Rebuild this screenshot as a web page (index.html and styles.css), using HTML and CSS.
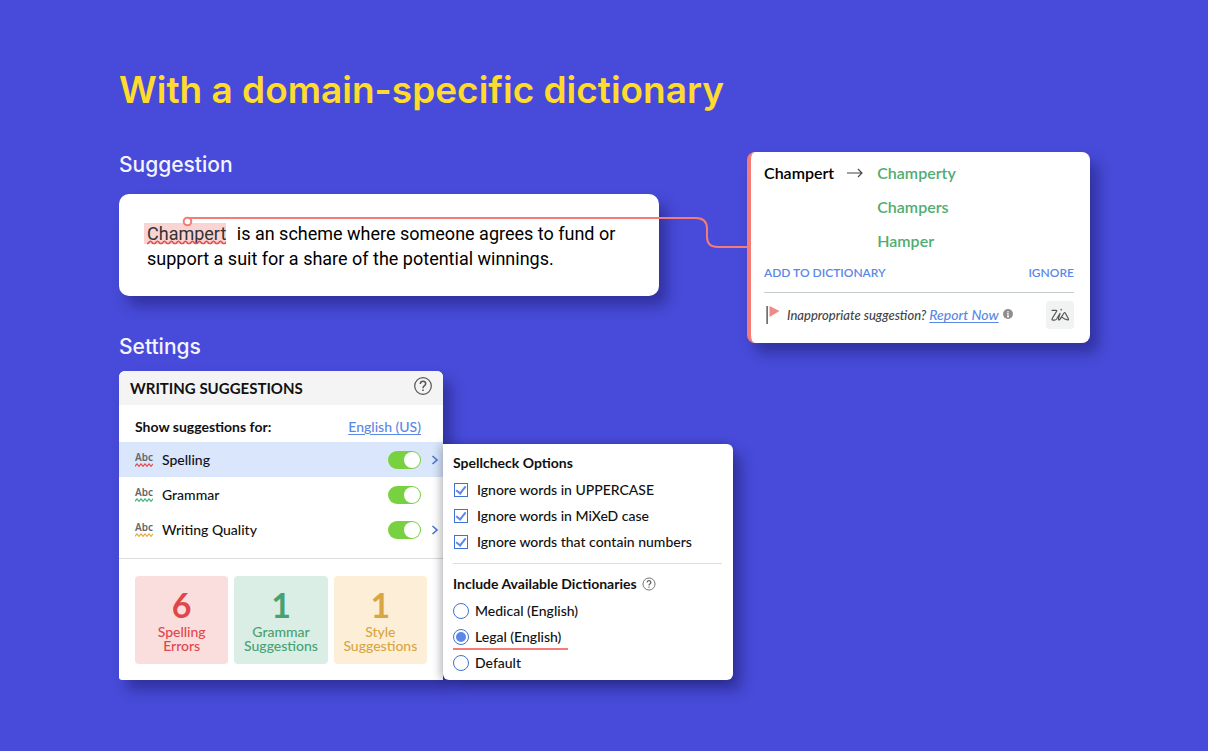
FILE: index.html
```html
<!DOCTYPE html>
<html lang="en">
<head>
<meta charset="utf-8">
<title>Domain-specific dictionary</title>
<link rel="stylesheet" href="styles.css">
</head>
<body>
<main class="page">
  <h1 class="title">With a domain-specific dictionary</h1>
  <div class="layout">
    <div class="main-col">
      <section>
        <h2 class="section-title">Suggestion</h2>
        <p class="sentence"><mark class="flagged">Champert<svg class="flagged-wave" height="5" aria-hidden="true"><defs><pattern id="wave" width="7" height="5" patternUnits="userSpaceOnUse"><path d="M-1 2.5Q0 4 1.2 3.3L2.5 1.7Q3.5 .7 4.5 1.7L5.8 3.3Q7 4 8 2.5" fill="none" stroke="#e2504f" stroke-width="1.5"/></pattern></defs><rect width="100%" height="5" fill="url(#wave)"/></svg></mark> is an scheme where someone agrees to fund or support a suit for a share of the potential winnings.</p>
      </section>
      <svg class="connector" width="566" height="40" viewBox="0 0 566 40" fill="none" stroke="#f37c78" stroke-width="2" aria-hidden="true">
        <path d="M6 6H514Q525 6 525 17V25Q525 35 536 35H566"/>
        <circle cx="5.500" cy="9.500" r="3.800" fill="#fff"/>
      </svg>
      <section>
        <h2 class="section-title settings-title">Settings</h2>
        <div class="panels">
          <div class="panel writing">
            <header class="panel-head">
              <h3 class="panel-title">WRITING SUGGESTIONS</h3>
              <button class="icon-btn" type="button" aria-label="Help">
                <svg width="20" height="20" viewBox="0 0 20 20" fill="none" stroke="#555" stroke-width="1.200"><circle cx="10" cy="10" r="8.300"/><path stroke-width="1.500" d="M7.300 8Q7.400 5.300 10 5.300T12.700 7.700Q12.700 9 11.200 9.900 10 10.600 10 12.200M10 13.600v1.500"/></svg>
              </button>
            </header>
            <div class="language"><span>Show suggestions for:</span><a class="link" href="#">English (US)</a></div>
            <ul class="checks">
              <li class="check active">
                <span class="abc red" aria-hidden="true">Abc<svg width="18" height="4" viewBox="0 0 18 4"><path d="M0 3.300 2 .9 4 3.300 6 .9 8 3.300 10 .9 12 3.300 14 .9 16 3.300 18 .9"/></svg></span>
                <label for="spelling">Spelling</label><input class="switch" id="spelling" type="checkbox" role="switch" checked>
                <button class="chevron" type="button" aria-label="Spelling options"><svg width="8" height="12" viewBox="0 0 8 12"><path d="M1.500 2 6 6 1.500 10"/></svg></button>
              </li>
              <li class="check">
                <span class="abc green" aria-hidden="true">Abc<svg width="18" height="4" viewBox="0 0 18 4"><path d="M0 3.300 2 .9 4 3.300 6 .9 8 3.300 10 .9 12 3.300 14 .9 16 3.300 18 .9"/></svg></span>
                <label for="grammar">Grammar</label><input class="switch" id="grammar" type="checkbox" role="switch" checked>
              </li>
              <li class="check">
                <span class="abc gold" aria-hidden="true">Abc<svg width="18" height="4" viewBox="0 0 18 4"><path d="M0 3.300 2 .9 4 3.300 6 .9 8 3.300 10 .9 12 3.300 14 .9 16 3.300 18 .9"/></svg></span>
                <label for="quality">Writing Quality</label><input class="switch" id="quality" type="checkbox" role="switch" checked>
                <button class="chevron" type="button" aria-label="Writing quality options"><svg width="8" height="12" viewBox="0 0 8 12"><path d="M1.500 2 6 6 1.500 10"/></svg></button>
              </li>
            </ul>
            <div class="stats">
              <div class="stat stat-red"><strong class="stat-num">6</strong>Spelling<br>Errors</div>
              <div class="stat stat-green"><strong class="stat-num">1</strong>Grammar<br>Suggestions</div>
              <div class="stat stat-gold"><strong class="stat-num">1</strong>Style<br>Suggestions</div>
            </div>
          </div>
          <form class="panel options">
            <fieldset class="group">
              <legend class="legend">Spellcheck Options</legend>
              <label class="option"><input class="tick" type="checkbox" checked>Ignore words in UPPERCASE</label>
              <label class="option"><input class="tick" type="checkbox" checked>Ignore words in MiXeD case</label>
              <label class="option"><input class="tick" type="checkbox" checked>Ignore words that contain numbers</label>
            </fieldset>
            <fieldset class="group dictionaries">
              <legend class="legend">Include Available Dictionaries
                <svg width="14" height="14" viewBox="0 0 20 20" fill="none" stroke="#666" stroke-width="1.300" aria-hidden="true"><circle cx="10" cy="10" r="8.600"/><path stroke-width="1.700" d="M7.300 8Q7.400 5.300 10 5.300T12.700 7.700Q12.700 9 11.200 9.900 10 10.600 10 12.200M10 13.600v1.700"/></svg>
              </legend>
              <label class="option choice"><input class="radio" type="radio" name="dict">Medical (English)</label>
              <label class="option choice chosen"><input class="radio" type="radio" name="dict" checked>Legal (English)</label>
              <label class="option choice"><input class="radio" type="radio" name="dict">Default</label>
            </fieldset>
          </form>
        </div>
      </section>
    </div>
    <aside class="popup">
      <div class="fixes">
        <span class="wrong">Champert</span>
        <svg class="arrow" width="16" height="10" viewBox="0 0 16 10" fill="none" stroke="#444" stroke-width="1.100" aria-hidden="true"><path d="M0 5H15M11 1 15 5 11 9"/></svg>
        <div class="fix-list">
          <button class="fix" type="button">Champerty</button>
          <button class="fix" type="button">Champers</button>
          <button class="fix" type="button">Hamper</button>
        </div>
      </div>
      <div class="actions">
        <button class="action" type="button">ADD TO DICTIONARY</button>
        <button class="action" type="button">IGNORE</button>
      </div>
      <footer class="report">
        <svg class="flag" width="14" height="18" viewBox="0 0 14 18" aria-hidden="true"><path d="M.5 0V18H1.700V0Z" fill="#333"/><path d="M3.500 0 13.500 5 3.500 11Z" fill="#f08a86"/></svg>
        <span>Inappropriate suggestion?</span>
        <a class="link" href="#">Report Now</a>
        <svg class="info" width="10" height="10" viewBox="0 0 10 10" aria-hidden="true"><circle cx="5" cy="5" r="5" fill="#8f8f8f"/><path d="M5 2v1.400M4.200 4.600H5V7.500M4 7.600H6" stroke="#fff" stroke-width="1.100" fill="none"/></svg>
        <button class="zia" type="button" aria-label="Zia">
          <svg width="20" height="16" viewBox="0 0 20 16" fill="none" stroke="#555" stroke-width="1.200" stroke-linecap="round" stroke-linejoin="round"><path d="M2 3.300H6Q7.200 3.300 6.500 4.500L2.200 11.500Q1.500 13.200 3 13.200H4.500Q5.800 13.200 6.600 12L10 6.500 8.700 10.800Q8 13.500 9.600 12.800L14 6Q14.800 4.900 15.400 6.200L18.300 11.500Q18.900 13 17.500 12.900 14.500 12.300 12.600 10.600 11.500 9.700 10.700 10.900"/><circle cx="11.300" cy="2.600" r=".3"/></svg>
        </button>
      </footer>
    </aside>
  </div>
</main>
</body>
</html>
```
FILE: styles.css
```css
* { box-sizing: border-box; }

body {
  margin: 0;
  min-height: 100vh;
  background: #484bd9;
  color: #111;
  font: 500 14px/20px Lato, "Liberation Sans", sans-serif;
}

h1, h2, h3, p, ul { margin: 0; padding: 0; }
button { padding: 0; border: 0; background: none; font: inherit; cursor: pointer; }
input { margin: 0; appearance: none; cursor: pointer; }
svg { display: block; flex: none; }

.page { padding: 66px 118px 64px 119px; }

.title {
  color: #ffdb2e;
  font: 600 37px/48px Inter, "Liberation Sans", sans-serif;
}

.layout {
  display: grid;
  grid-template-columns: minmax(0, 1fr) 343px;
  gap: 14px;
  align-items: start;
  margin-top: 38px;
}

.main-col { position: relative; }

.section-title {
  color: #f4f4ff;
  font: 500 21px/26px Inter, "Liberation Sans", sans-serif;
}

.settings-title { margin-top: 38px; }

.sentence {
  width: 88%;
  margin-top: 16px;
  padding: 27px 36px 25px 28px;
  border-radius: 10px;
  background: #fff;
  box-shadow: 8px 10px 14px rgb(20 20 90 / 45%);
  color: #000;
  font: 400 18px/25px Roboto, sans-serif;
}

.flagged {
  position: relative;
  margin: 0 6px 0 -3px;
  padding-left: 3px;
  background: #fad4d2;
  color: #333;
}

.flagged-wave {
  position: absolute;
  left: 3px;
  bottom: -1px;
  width: calc(100% - 3px);
}

.connector { position: absolute; top: 60px; left: 63px; z-index: 3; }

.panels {
  display: grid;
  grid-template-columns: 324fr 290fr;
  align-items: end;
  margin-top: 11px;
}

.panel { background: #fff; box-shadow: 8px 10px 14px rgb(20 20 90 / 45%); }

.writing { border-radius: 6px 6px 0 3px; }

.panel-head {
  display: flex;
  align-items: center;
  justify-content: space-between;
  height: 34px;
  padding: 0 10px 0 11px;
  border-radius: 6px 6px 0 0;
  background: #f4f4f4;
}

.panel-title { font-size: 15px; font-weight: 700; }
.icon-btn { margin-bottom: 4px; }

.language {
  display: flex;
  justify-content: space-between;
  padding: 12px 22px 5px 16px;
  font-weight: 700;
}

.link { color: #5a88e6; font-weight: 500; text-underline-offset: 2px; }

.checks { list-style: none; padding-bottom: 11px; border-bottom: 1px solid #ddd; }

.check {
  display: flex;
  align-items: center;
  height: 35px;
  padding: 0 4px 0 16px;
}

.check.active { background: #d9e6fc; }
.check label { flex: 1; margin-left: 8px; }
.check:not(:has(.chevron)) { padding-right: 22px; }

.abc {
  width: 19px;
  color: #666;
  font: 600 10px/11px "Noto Sans", sans-serif;
}

.abc path { fill: none; stroke: currentColor; stroke-width: 1.200; }
.red svg { color: #e5484d; }
.green svg { color: #3fb27a; }
.gold svg { color: #e5ab3a; }

.switch {
  width: 33px;
  height: 18px;
  padding: 1px;
  border-radius: 9px;
  background: #b9b9b9;
}

.switch::before {
  content: "";
  display: block;
  width: 16px;
  height: 16px;
  border-radius: 50%;
  background: #fff;
}

.switch:checked { background: #77d140; }
.switch:checked::before { margin-left: auto; }

.chevron { margin-left: 10px; }
.chevron path { fill: none; stroke: #4a74d2; stroke-width: 1.600; }

.stats {
  display: grid;
  grid-template-columns: repeat(3, 1fr);
  gap: 6px;
  padding: 17px 16px 16px;
}

.stat {
  padding: 11px 0;
  border-radius: 4px;
  line-height: 14px;
  text-align: center;
}

.stat-num { display: block; margin-bottom: 2px; font-size: 34px; line-height: 36px; font-weight: 700; }
.stat-red { background: #fadddd; color: #e0474a; }
.stat-green { background: #daeee6; color: #49a172; }
.stat-gold { background: #fdefd7; color: #d9a643; }

.options {
  z-index: 1;
  padding: 9px 11px 4px 10px;
  border-radius: 0 6px 6px 6px;
  box-shadow: -3px 0 10px rgb(0 0 0 / 22%), 8px 10px 14px rgb(20 20 90 / 45%);
}

.group { margin: 0; padding: 0 0 8px; border: 0; }
.legend { display: flex; align-items: center; gap: 5px; margin-bottom: 4px; padding: 0; font-weight: 700; }
.option { display: flex; align-items: center; gap: 9px; height: 26px; }
.dictionaries { padding: 10px 0 0; border-top: 1px solid #ddd; }
.dictionaries .legend { float: left; width: 100%; }
.choice { clear: both; gap: 6px; }

.tick {
  display: grid;
  place-items: center;
  width: 14px;
  height: 14px;
  margin-left: 1px;
  border: 1px solid #3f70d2;
  background: #fff;
}

.tick:checked::before {
  content: "";
  width: 4px;
  height: 8px;
  margin-bottom: 2px;
  border: solid #5a88e6;
  border-width: 0 2px 2px 0;
  transform: rotate(38deg);
}

.radio {
  width: 16px;
  height: 16px;
  padding: 2px;
  border: 1px solid #3f70d2;
  border-radius: 50%;
}

.radio:checked { background: #5a88e6 content-box; }

.chosen { position: relative; }
.chosen::after {
  content: "";
  position: absolute;
  bottom: 0;
  left: 0;
  width: 115px;
  height: 2px;
  background: #f37c78;
}

.popup {
  padding: 4px 16px 14px 13px;
  border-left: 4px solid #f37c78;
  border-radius: 8px;
  background: #fff;
  box-shadow: 8px 10px 14px rgb(20 20 90 / 45%);
}

.fixes { display: flex; color: #000; font-size: 16px; line-height: 34px; font-weight: 600; }
.arrow { margin: 12px 14px 0 13px; }
.fix-list { display: flex; flex-direction: column; align-items: flex-start; }
.fix { color: #4fac72; }

.actions {
  display: flex;
  justify-content: space-between;
  padding: 5px 0 9px;
  border-bottom: 1px solid #c6cbcb;
}

.action { color: #5a88e6; font-size: 12px; font-weight: 600; }

.report {
  display: flex;
  align-items: center;
  padding-top: 8px;
  color: #444;
  font-size: 13px;
  font-style: italic;
}

.flag { margin: 0 7px 0 2px; }
.report .link { margin: 0 4px 0 3px; font-size: 14px; }
.info { margin-bottom: 2px; }

.zia {
  display: grid;
  place-items: center;
  width: 28px;
  height: 28px;
  margin-left: auto;
  border-radius: 4px;
  background: #f1f2f2;
}
```
